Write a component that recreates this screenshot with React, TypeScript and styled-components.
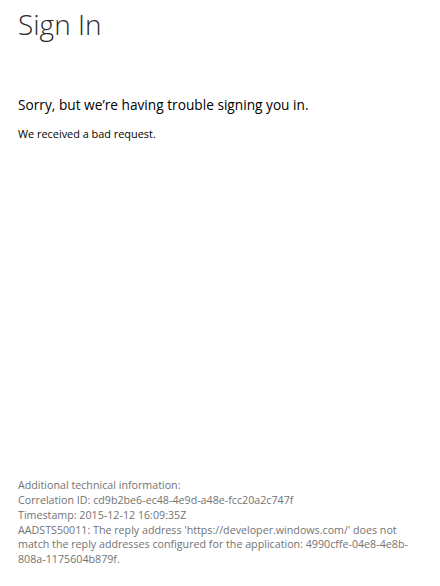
import React from "react";
import styled, { createGlobalStyle } from "styled-components";

const GlobalStyle = createGlobalStyle`
  html, body { margin: 0; padding: 0; background: #fff; }
  body { font-family: "Open Sans", "Noto Sans", sans-serif; }
`;

const Page = styled.div`
  box-sizing: border-box;
  min-height: 586px;
  display: flex;
  flex-direction: column;
  padding: 3px 18px 19px 18px;
`;

const Title = styled.h1`
  margin: 0;
  font-family: "Open Sans", "Noto Sans", sans-serif;
  font-weight: 300;
  font-size: 28px;
  line-height: 42px;
  color: #2a2a2a;
`;

const Headline = styled.div`
  margin-top: 50px;
  font-size: 13.7px;
  line-height: 20px;
  color: #000;
`;

const Message = styled.div`
  margin-top: 11px;
  font-size: 10.9px;
  line-height: 16px;
  color: #000;
`;

const Footer = styled.div`
  margin-top: auto;
  max-width: 400px;
  font-size: 10.7px;
  line-height: 14.8px;
  color: #737373;
`;

const Line = styled.div``;

export default function App() {
  return (
    <>
      <GlobalStyle />
      <Page>
        <Title>Sign In</Title>
        <Headline>Sorry, but we’re having trouble signing you in.</Headline>
        <Message>We received a bad request.</Message>
        <Footer>
          <Line>Additional technical information:</Line>
          <Line>Correlation ID: cd9b2be6-ec48-4e9d-a48e-fcc20a2c747f</Line>
          <Line>Timestamp: 2015-12-12 16:09:35Z</Line>
          <Line>
            AADSTS50011: The reply address 'https://developer.windows.com/' does not match the reply
            addresses configured for the application: 4990cffe-04e8-4e8b-808a-1175604b879f.
          </Line>
        </Footer>
      </Page>
    </>
  );
}
